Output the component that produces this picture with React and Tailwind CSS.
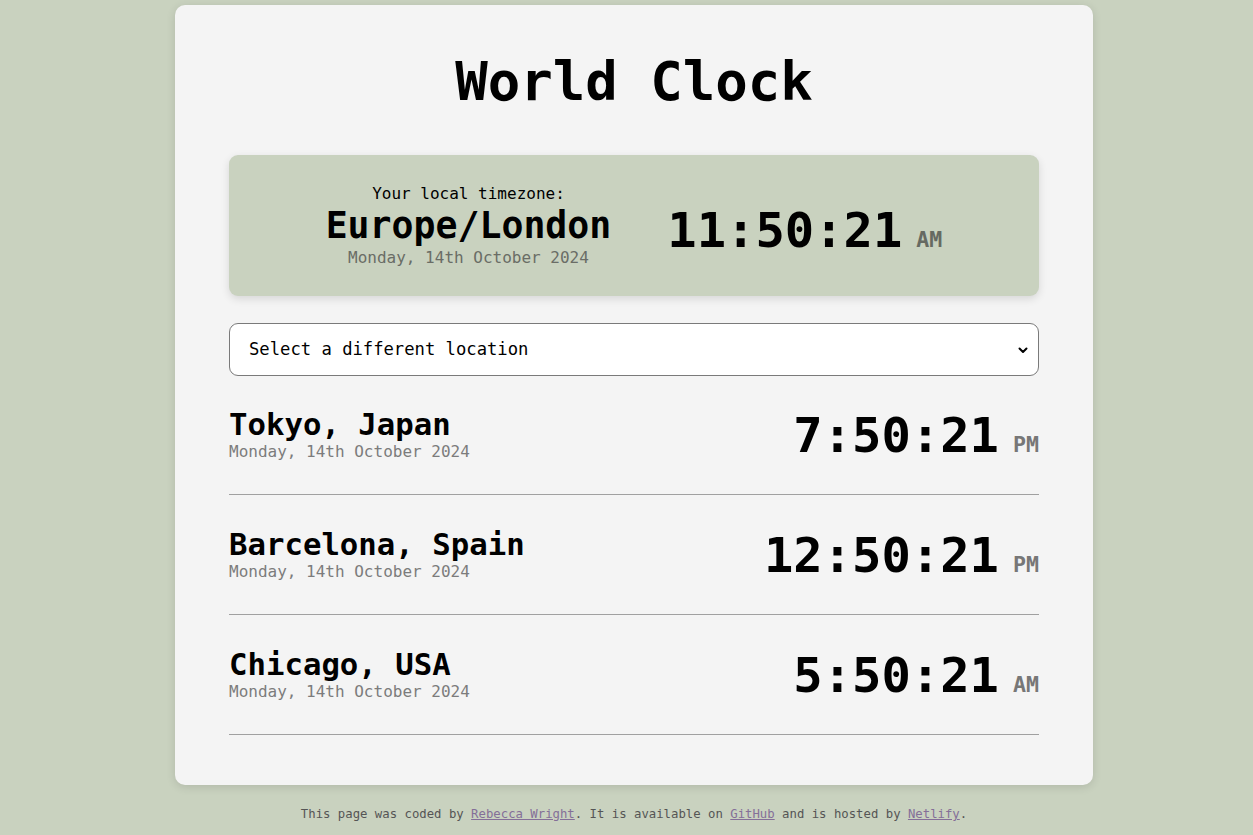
import React from "react";

const rows = [
  { name: "Tokyo, Japan", time: "7:50:21", ap: "PM" },
  { name: "Barcelona, Spain", time: "12:50:21", ap: "PM" },
  { name: "Chicago, USA", time: "5:50:21", ap: "AM" },
];

export default function App() {
  return (
    <div className="min-h-[835px] bg-[#c9d2bf] font-['DejaVu_Sans_Mono',monospace] text-black pl-[15px] pt-[5px]">
      <div className="mx-auto w-[918px] h-[780px] bg-[#f4f4f4] rounded-[10px] shadow-[0_2px_10px_rgba(0,0,0,0.12)] px-[54px] pt-[44px]">
        <h1 className="text-center text-[54px] leading-[66px] font-bold">World Clock</h1>

        <div className="mt-[40px] h-[141px] bg-[#c9d2bf] rounded-[9px] shadow-[0_3px_8px_rgba(0,0,0,0.12)] flex items-center justify-center gap-[56px]">
          <div className="flex flex-col items-center">
            <div className="text-[16px] leading-[18px]">Your local timezone:</div>
            <div className="text-[36.5px] leading-[46px] font-bold">Europe/London</div>
            <div className="text-[16px] leading-[18px] text-[#6a6d66]">Monday, 14th October 2024</div>
          </div>
          <div className="flex items-baseline pt-[10px]">
            <span className="text-[48.8px] leading-[58px] font-bold">11:50:21</span>
            <span className="text-[21.6px] font-bold text-[#666a62] ml-[14px]">AM</span>
          </div>
        </div>

        <div className="mt-[27px] relative h-[53px] bg-white border border-[#7a7a7a] rounded-[9px] flex items-center px-[19px]">
          <span className="text-[17.2px]">Select a different location</span>
          <svg className="absolute right-[9px] top-[20px]" width="12" height="12" viewBox="0 0 12 12" fill="none" stroke="black" strokeWidth="2" strokeLinecap="round" strokeLinejoin="round">
            <path d="M2.5 4.5 L6 8 L9.5 4.5" />
          </svg>
        </div>

        {rows.map((r, i) => (
          <div
            key={r.name}
            className={
              i === 0
                ? "h-[119px] border-b border-[#a0a0a0] flex items-center justify-between"
                : "h-[120px] border-b border-[#a0a0a0] flex items-center justify-between"
            }
          >
            <div className="flex flex-col">
              <div className="text-[30.7px] leading-[34px] font-bold">{r.name}</div>
              <div className="text-[16px] leading-[20px] text-[#7c7c7c]">Monday, 14th October 2024</div>
            </div>
            <div className="flex items-baseline pt-[2px]">
              <span className="text-[48.8px] leading-[58px] font-bold">{r.time}</span>
              <span className="text-[21.6px] font-bold text-[#777] ml-[14px]">{r.ap}</span>
            </div>
          </div>
        ))}
      </div>

      <div className="text-center text-[12.3px] text-[#555] mt-[20px]">
        This page was coded by <span className="underline text-[#846f98]">Rebecca Wright</span>. It is available on{" "}
        <span className="underline text-[#846f98]">GitHub</span> and is hosted by{" "}
        <span className="underline text-[#846f98]">Netlify</span>.
      </div>
    </div>
  );
}
